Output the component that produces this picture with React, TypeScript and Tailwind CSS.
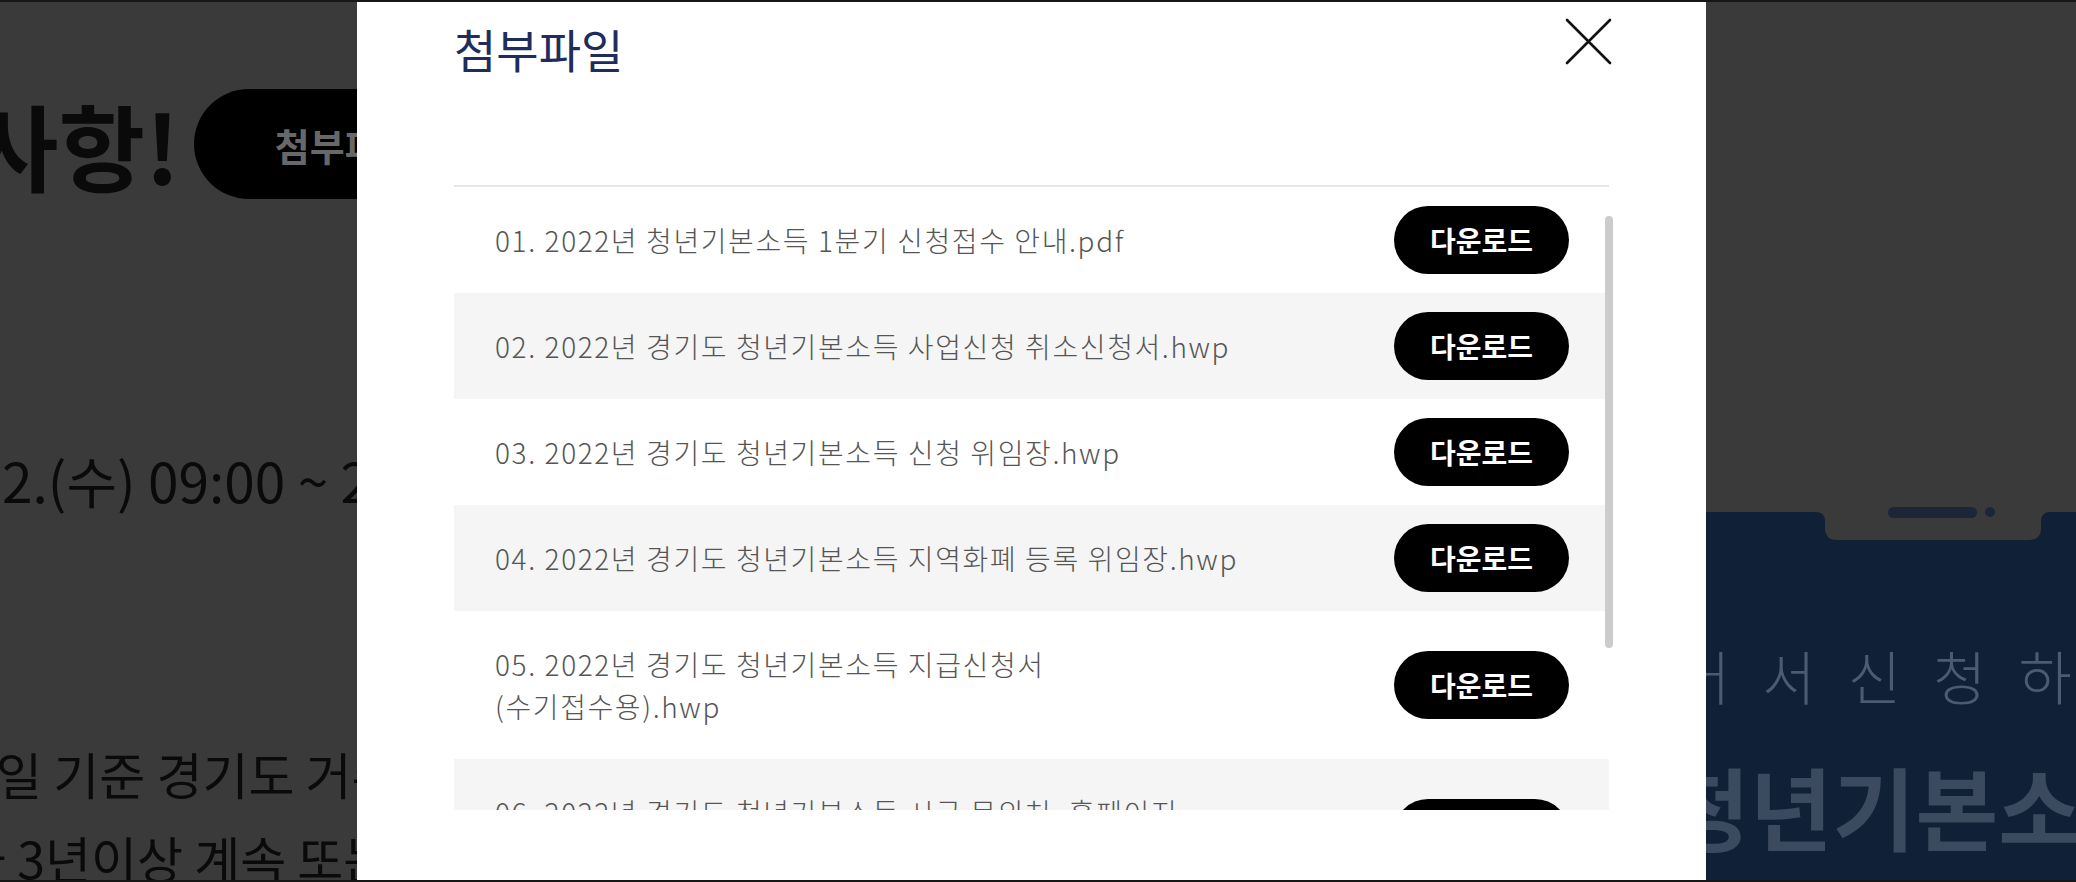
const files = [
  { id: 1, lines: ["01. 2022년 청년기본소득 1분기 신청접수 안내.pdf"] },
  { id: 2, lines: ["02. 2022년 경기도 청년기본소득 사업신청 취소신청서.hwp"] },
  { id: 3, lines: ["03. 2022년 경기도 청년기본소득 신청 위임장.hwp"] },
  { id: 4, lines: ["04. 2022년 경기도 청년기본소득 지역화폐 등록 위임장.hwp"] },
  { id: 5, lines: ["05. 2022년 경기도 청년기본소득 지급신청서", "(수기접수용).hwp"] },
  { id: 6, lines: ["06. 2022년 경기도 청년기본소득 시군 문의처, 홈페이지", "안내.hwp"] },
];

const font = { fontFamily: '"Noto Sans CJK KR", "Noto Sans", sans-serif' };

function PhoneTop() {
  return (
    <svg width="370" height="40" viewBox="0 0 370 40" className="block shrink-0">
      <path
        d="M0,12 H110 Q118,12 119,20 V30 Q120,40 131,40 H323 Q334,40 335,30 V20 Q336,12 344,12 H370 V40 H0 Z"
        fill="#0f2037"
      />
      <rect x="182" y="7" width="89" height="11" rx="5.5" fill="#1b2638" />
      <circle cx="284" cy="12" r="5" fill="#1b2638" />
    </svg>
  );
}

function CloseIcon() {
  return (
    <svg width="47" height="47" viewBox="0 0 47 47" fill="none">
      <path d="M2 2 L45 45 M45 2 L2 45" stroke="#111111" strokeWidth="2.6" strokeLinecap="round" />
    </svg>
  );
}

function FileRow({ lines, shaded }: { lines: string[]; shaded: boolean }) {
  return (
    <div
      className={`flex items-center justify-between pl-[41px] pr-[40px] ${
        shaded ? "bg-[#f5f5f5]" : "bg-white"
      }`}
    >
      <p className="py-[32px] text-[28px] font-light leading-[42px] tracking-[1.6px] text-[#555555]">
        {lines.map((l, i) => (
          <span key={i} className="block whitespace-nowrap">
            {l}
          </span>
        ))}
      </p>
      <button className="h-[68px] w-[175px] shrink-0 rounded-full bg-black text-[28px] font-bold text-white">
        다운로드
      </button>
    </div>
  );
}

export default function App() {
  return (
    <div
      style={font}
      className="relative h-[882px] w-[2076px] overflow-hidden border-y-2 border-[#161616] bg-[#3a3a3a]"
    >
      {/* page behind the dim layer */}
      <div className="flex h-full">
        <div className="flex w-[1706px] shrink-0 flex-col overflow-hidden">
          <div className="mt-[87px] flex items-center">
            <span className="-ml-[28px] whitespace-nowrap text-[94px] font-bold leading-none text-[#0a0a0a]">
              사항!
            </span>
            <div className="ml-[14px] flex h-[110px] items-center rounded-full bg-black pl-[81px] pr-[81px]">
              <span className="whitespace-nowrap text-[38px] font-bold text-[#686868]">첨부파일</span>
            </div>
          </div>
          <p className="ml-[2px] mt-[248px] whitespace-nowrap text-[55px] leading-[64px] text-[#0a0a0a]">
            2.(수) 09:00 ~ 2022. 3. 31.(목) 18:00
          </p>
          <p className="-ml-[4px] mt-[220px] whitespace-nowrap text-[50px] leading-[84px] text-[#0a0a0a]">
            일 기준 경기도 거주하고 있는 만 24세 청년
          </p>
          <p className="-ml-[40px] whitespace-nowrap text-[50px] leading-[84px] text-[#0a0a0a]">
            과 3년이상 계속 또는 합산 10년 이상
          </p>
        </div>
        <div className="flex flex-1 flex-col overflow-hidden">
          <div className="h-[498px] shrink-0" />
          <PhoneTop />
          <div className="flex flex-1 flex-col bg-[#0f2037]">
            <p className="-ml-[29px] mt-[100px] whitespace-nowrap text-[58px] font-light leading-[70px] tracking-[32px] text-[#4d5b70]">
              어서신청하세요
            </p>
            <p className="-ml-[39px] mt-[45px] whitespace-nowrap text-[90px] font-bold leading-[100px] text-[#3b4a5e]">
              청년기본소득
            </p>
          </div>
        </div>
      </div>

      {/* modal */}
      <div className="absolute left-[357px] top-0 flex h-[878px] w-[1349px] flex-col bg-white px-[97px]">
        <div className="h-[185px] shrink-0 border-b-2 border-[#e8e8e8] pt-[18px]">
          <h2 className="text-[46px] leading-[56px] text-[#1f2d5d]">첨부파일</h2>
        </div>
        <button className="absolute right-[94px] top-[16px]">
          <CloseIcon />
        </button>
        <div className="h-[623px] overflow-hidden">
          {files.map((f) => (
            <FileRow key={f.id} lines={f.lines} shaded={f.id % 2 === 0} />
          ))}
        </div>
        <div className="absolute left-[1248px] top-[214px] h-[432px] w-[8px] rounded-full bg-[#cccccc]" />
      </div>
    </div>
  );
}
